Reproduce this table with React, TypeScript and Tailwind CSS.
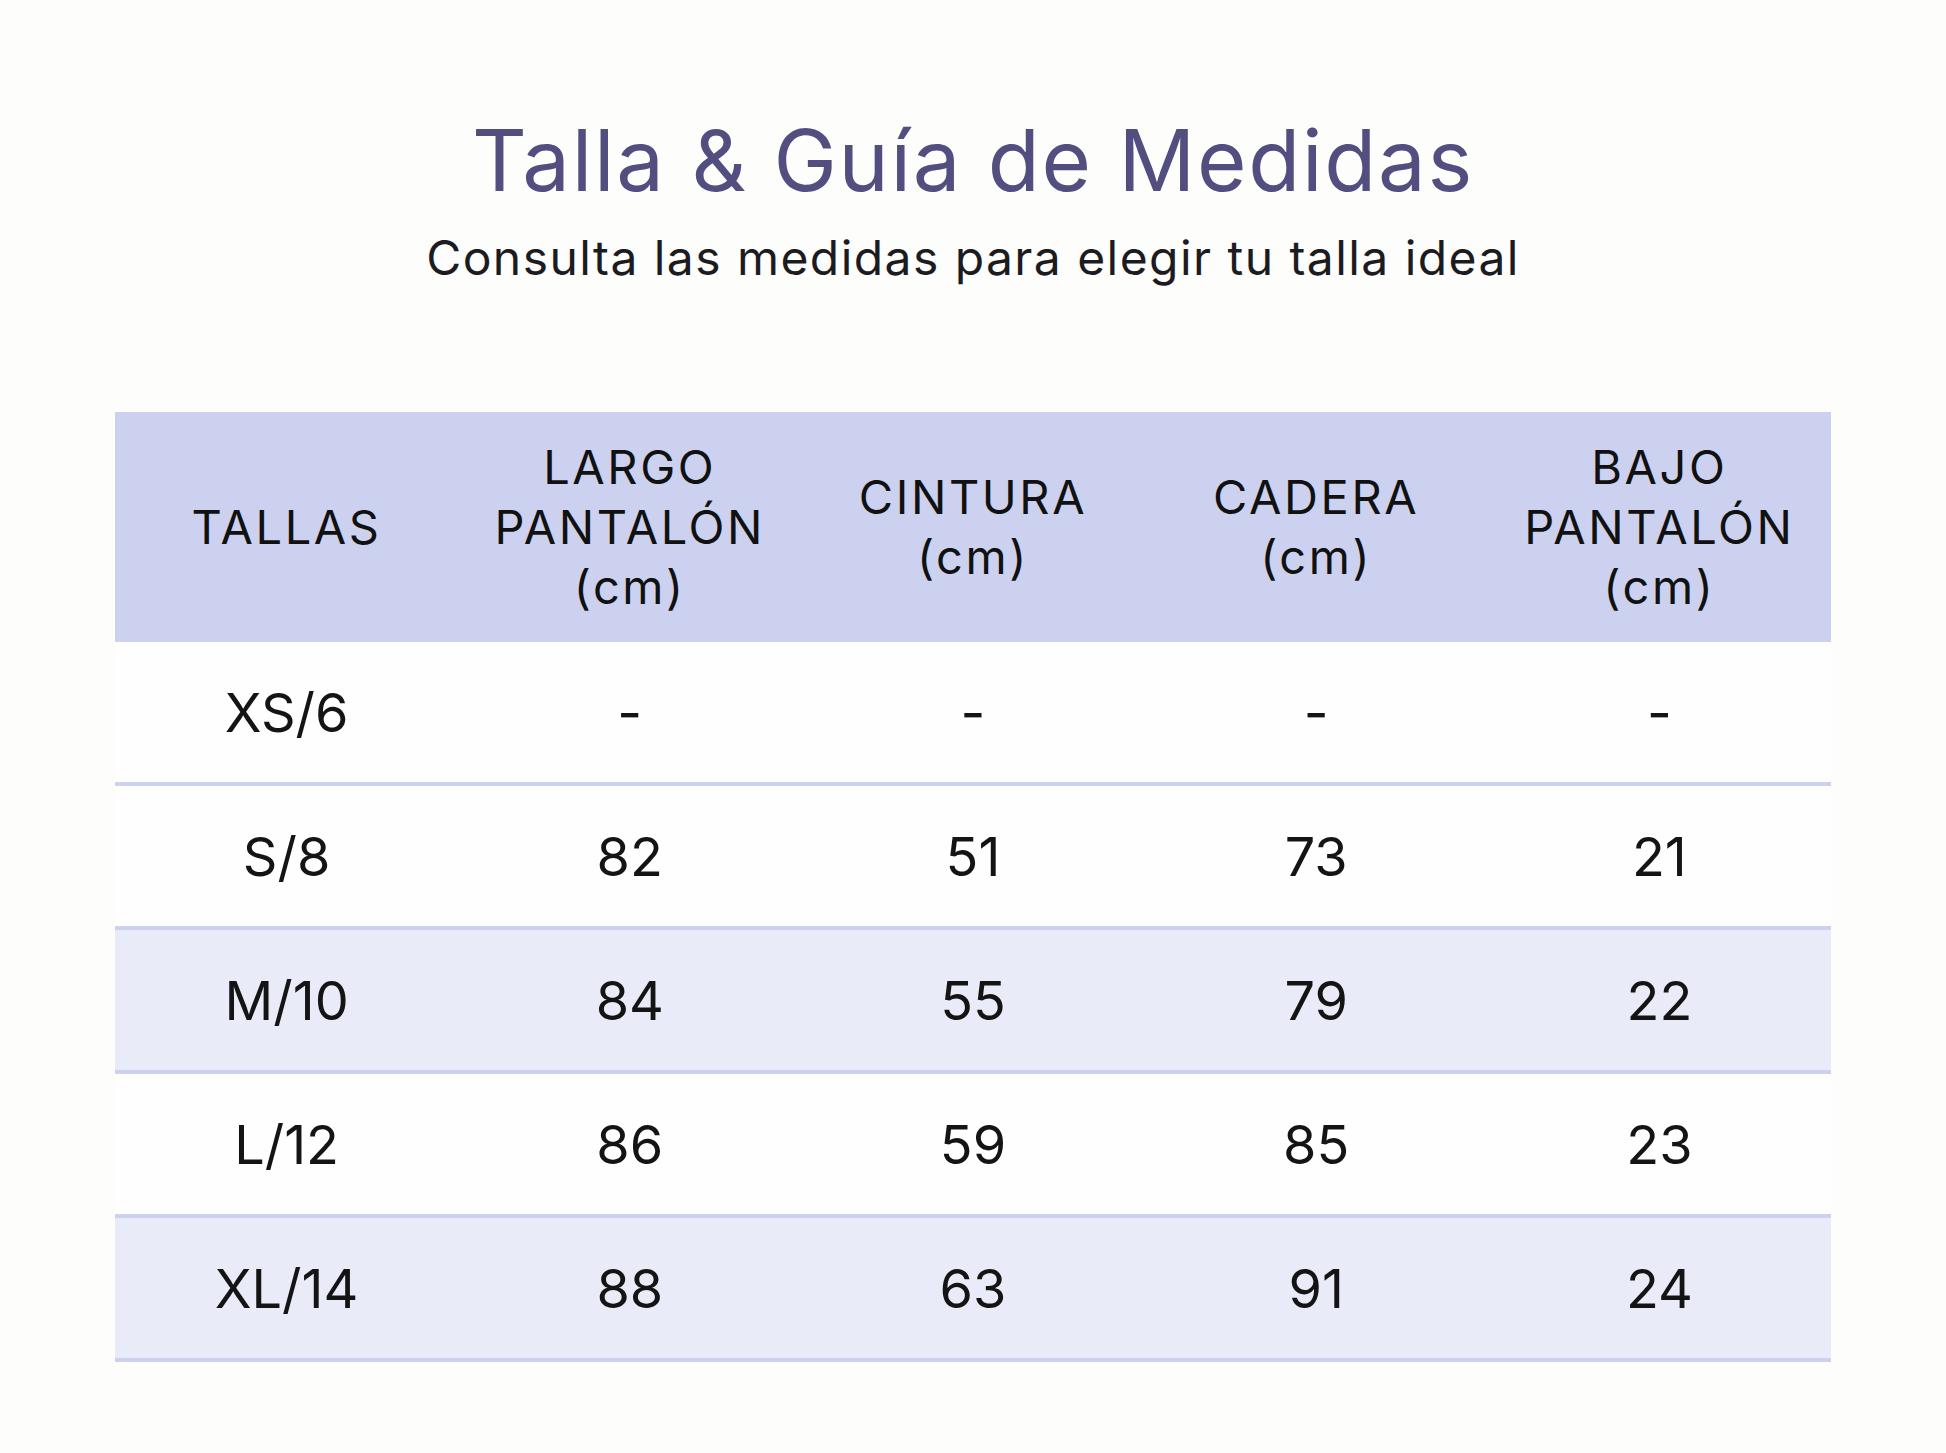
import React from "react";

const rows: { size: string; vals: string[]; tint: boolean }[] = [
  { size: "XS/6", vals: ["-", "-", "-", "-"], tint: false },
  { size: "S/8", vals: ["82", "51", "73", "21"], tint: false },
  { size: "M/10", vals: ["84", "55", "79", "22"], tint: true },
  { size: "L/12", vals: ["86", "59", "85", "23"], tint: false },
  { size: "XL/14", vals: ["88", "63", "91", "24"], tint: true },
];

const headers: string[][] = [
  ["TALLAS"],
  ["LARGO", "PANTALÓN", "(cm)"],
  ["CINTURA", "(cm)"],
  ["CADERA", "(cm)"],
  ["BAJO", "PANTALÓN", "(cm)"],
];

export default function App() {
  return (
    <div
      className="w-[1946px] h-[1453px] bg-[#fdfdfb] flex flex-col items-center pt-[118px]"
      style={{ fontFamily: "Inter, 'Noto Sans', sans-serif" }}
    >
      <h1 className="text-[85px] leading-none font-normal text-[#524e80] tracking-[0.02em]">
        Talla &amp; Guía de Medidas
      </h1>
      <p className="mt-[31px] text-[48px] leading-none text-[#1c1b22] tracking-[0.03em]">
        Consulta las medidas para elegir tu talla ideal
      </p>
      <div className="mt-[130px] w-[1716px]">
        <div className="grid grid-cols-5 h-[230px] bg-[#ccd1f0] text-[#111111]">
          {headers.map((h, i) => (
            <div
              key={i}
              className="flex flex-col items-center justify-center text-[47px] leading-[60px] text-center tracking-[0.055em]"
            >
              {h.map((l, j) => (
                <span key={j}>{l}</span>
              ))}
            </div>
          ))}
        </div>
        {rows.map((r, i) => (
          <div
            key={i}
            className={
              "grid grid-cols-5 h-[144px] border-b-[4px] border-[#cdd1f1] text-[54px] text-[#141414] " +
              (r.tint ? "bg-[#eaebf8]" : "bg-[#fefefe]")
            }
          >
            <div className="flex items-center justify-center">{r.size}</div>
            {r.vals.map((v, j) => (
              <div key={j} className="flex items-center justify-center">
                {v}
              </div>
            ))}
          </div>
        ))}
      </div>
    </div>
  );
}
